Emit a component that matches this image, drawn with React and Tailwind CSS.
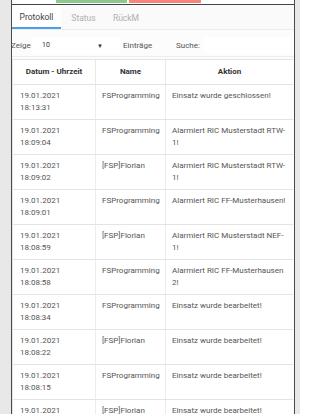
const rows = [
  ["19.01.2021", "18:13:31", "FSProgramming", "Einsatz wurde geschlossen!"],
  ["19.01.2021", "18:09:04", "FSProgramming", "Alarmiert RIC Musterstadt RTW-1!"],
  ["19.01.2021", "18:09:02", "[FSP]Florian", "Alarmiert RIC Musterstadt RTW-1!"],
  ["19.01.2021", "18:09:01", "FSProgramming", "Alarmiert RIC FF-Musterhausen!"],
  ["19.01.2021", "18:08:59", "[FSP]Florian", "Alarmiert RIC Musterstadt NEF-1!"],
  ["19.01.2021", "18:08:58", "FSProgramming", "Alarmiert RIC FF-Musterhausen 2!"],
  ["19.01.2021", "18:08:34", "FSProgramming", "Einsatz wurde bearbeitet!"],
  ["19.01.2021", "18:08:22", "[FSP]Florian", "Einsatz wurde bearbeitet!"],
  ["19.01.2021", "18:08:15", "FSProgramming", "Einsatz wurde bearbeitet!"],
  ["19.01.2021", "18:08:10", "[FSP]Florian", "Einsatz wurde bearbeitet!"],
];

export default function App() {
  return (
    <div className="w-[300px] h-[414px] overflow-hidden bg-[#e8e8e8] pl-[11px] pr-[5px] font-['Roboto',sans-serif] text-[8px]">
      <div className="h-full border-x border-[#4a4a4a] bg-[#fcfcfc]">
        {/* top buttons */}
        <div className="h-[5px] bg-white border-b border-[#444] flex gap-[2px] pl-[44px]">
          <div className="w-[71px] h-[3px] bg-[#8cc98c]" />
          <div className="w-[72px] h-[3px] bg-[#f8857b]" />
        </div>

        {/* tabs */}
        <div className="h-[25px] flex bg-[#fafafa] border-b border-[#ececec] text-[8.5px]">
          <div className="w-[49px] bg-white flex items-center justify-center border-b-2 border-[#4a9fe8] text-[#444] pt-[2px]">
            Protokoll
          </div>
          <div className="w-[45px] flex items-center justify-center text-[#b0b0b0] pt-[2px]">Status</div>
          <div className="w-[40px] flex items-center justify-center text-[#b0b0b0] pt-[2px]">RückM</div>
        </div>

        {/* filter */}
        <div className="h-[27px] flex items-start pt-[7px] text-[#555] border-b border-[#ececec]">
          <span className="w-[21px] -ml-[1px] h-[17px] flex items-center">Zeige</span>
          <div className="w-[88px] h-[17px] bg-white flex items-center justify-between pl-[10px] pr-[17px] text-[#333]">
            <span className="text-[7px]">10</span>
            <span className="text-[6px] text-[#333]">▼</span>
          </div>
          <span className="ml-[3px] w-[53px] h-[17px] flex items-center">Einträge</span>
          <span className="w-[28px] h-[17px] flex items-center">Suche:</span>
          <div className="flex-1 h-[17px] bg-white" />
        </div>

        {/* table */}
        <div className="mt-[2px] border-t border-l border-[#e4e4e4] mr-[1px]">
          <div className="grid grid-cols-[83px_70px_1fr] h-[25px] border-b border-[#e4e4e4] bg-white font-bold text-[#333]">
            <div className="flex items-center justify-center border-r border-[#e8e8e8]">Datum - Uhrzeit</div>
            <div className="flex items-center justify-center border-r border-[#e8e8e8]">Name</div>
            <div className="flex items-center justify-center">Aktion</div>
          </div>
          {rows.map((r, i) => (
            <div key={i} className="grid grid-cols-[83px_70px_1fr] h-[35px] border-b border-[#e4e4e4] bg-white text-[#555] leading-[12px]">
              <div className="pl-[7px] pt-[5px] border-r border-[#ececec]">
                <div>{r[0]}</div>
                <div>{r[1]}</div>
              </div>
              <div className="pl-[6px] pt-[5px] border-r border-[#ececec]">{r[2]}</div>
              <div className="pl-[6px] pr-[6px] pt-[5px]">{r[3]}</div>
            </div>
          ))}
        </div>
      </div>
    </div>
  );
}
